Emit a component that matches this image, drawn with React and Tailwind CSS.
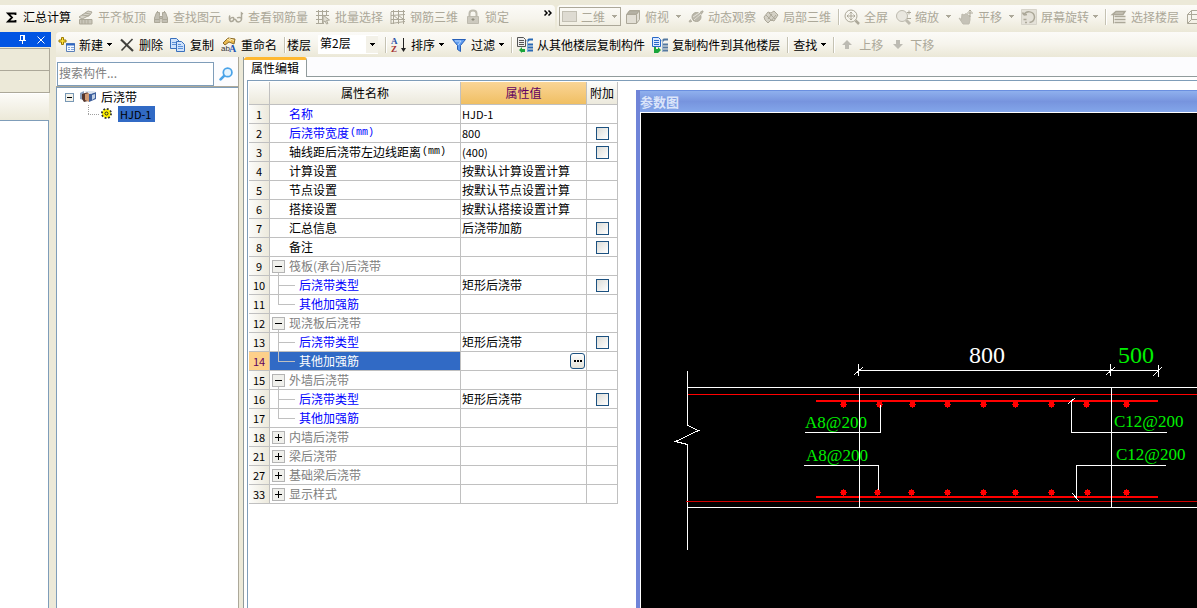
import { useState } from "react";

// ─── Icons ───────────────────────────────────────────────────────────────────

const GREY = "#aca899";

function Svg({ children, fill = "none", stroke = GREY }) {
  return (
    <svg width="16" height="16" viewBox="0 0 16 16" fill={fill} stroke={stroke} className="shrink-0 overflow-visible" aria-hidden="true">
      {children}
    </svg>
  );
}

const icons = {
  sum: (
    <Svg stroke="#000">
      <path d="M12.500 6V4.500H5L9 8.500 5 12.500h7.500V11" strokeWidth="1.800" />
    </Svg>
  ),
  slab: (
    <Svg>
      <path d="M1 8l9-6 4 1-2 3-8 4z" fill="#d6d3c8" />
      <path d="M4 6l7 1M7 4l5 1" />
      <path d="M1.500 15V10.500H14V15zM4 11v4M7 11v4M10 11v4" fill="#c9c6ba" />
    </Svg>
  ),
  binoculars: (
    <Svg fill="#c2bfb3">
      <path d="M3.500 3.500h3v3l.5 1v6H1.500V9zM12.500 3.500h-3v3l-.5 1v6h5.500V9z" />
      <path d="M6.500 7.500h3v2h-3zM2 10.500h4.500M9.500 10.500H14M4.500 2v2M11.500 2v2" />
    </Svg>
  ),
  glasses: (
    <Svg>
      <path d="M2 6.500C1 8 1 12.500 3.500 12.500S6.500 8.500 5 8.500 2 9.500 2 10.500M8 10.500c0 2 1 2.500 2.500 2.500s3-1.500 3-3-3-2-4.500-1M13.500 10.500V4l1.500 1M6.500 10.500H8" strokeWidth="1.500" />
    </Svg>
  ),
  batch: (
    <Svg>
      <path d="M1 2.500h13M1 6.500h13M1 10.500h8M1 14.500h8M3.500 1v14M7.500 1v14M11.500 1v6" />
      <path d="M8 6l6.500 5-3 .5 1.500 3-1.500.5-1.500-3-2 1.500z" fill="#dedbd0" />
    </Svg>
  ),
  rebar: (
    <Svg>
      <path d="M1 2.500h14M1 6.500l14-1M1 10.500h14M1 14.500l14-2M3.500 1v14M8.500 1v14M13.500 1v14M1 3v12M3 6l5 4M8 6l5 4" />
    </Svg>
  ),
  lock: (
    <Svg stroke="#bdbaae">
      <path d="M4.500 7V4.500Q4.500 1.500 8 1.500t3.500 3V7" strokeWidth="2" />
      <path d="M2.500 7.500h11v7h-11z" fill="#ccc9be" />
      <path d="M8 9v3M6.500 10.500h3" stroke="#8f8c7f" />
    </Svg>
  ),
  cube: (
    <Svg fill="#e2dfd5">
      <path d="M1.500 5.500l3-4h10v9l-3 4h-10zM1.500 5.500h10v9M11.500 5.500l3-4" />
      <path d="M2 5l3-3h9l-3 3z" fill="#b5b2a5" />
    </Svg>
  ),
  orbit: (
    <Svg fill="#bbb8ac">
      <circle cx="8.500" cy="8" r="4.500" />
      <path d="M4 12C1 14 .500 13 2.500 10.500M12 3.500c3-2.500 4-2 2 1L5 12" />
      <path d="M5 8l6-4M6 11l7-6" stroke="#e6e3da" />
    </Svg>
  ),
  part3d: (
    <Svg fill="#d4d1c6">
      <path d="M1 8l4-5 3 1 3-2 4 4-4 6-3-1-3 3-3-3z" />
      <path d="M3 6l6 6M6 4l6 6M5 10l4-5M8 12l5-6" />
    </Svg>
  ),
  fullscreen: (
    <Svg>
      <circle cx="7" cy="7" r="6" />
      <path d="M7 3v8M3 7h8M5.500 4.500L7 3l1.500 1.500M5.500 9.500L7 11l1.500-1.500M4.500 5.500L3 7l1.500 1.500M9.500 5.500L11 7 9.500 8.500" />
      <path d="M11.500 11.500L15 15" strokeWidth="2.500" />
    </Svg>
  ),
  zoom: (
    <Svg stroke="#bdbaae">
      <circle cx="7" cy="7" r="5.500" fill="#e9e7df" />
      <path d="M11 11l4 4" strokeWidth="3" />
      <path d="M12 3.500h4M14 1.500v4M12 9.500h4" stroke={GREY} />
    </Svg>
  ),
  hand: (
    <Svg fill="#c5c2b7" stroke="#bdbaae">
      <path d="M1 9l2.500 1.500L4 5l2 1 2-1.500L10 6l2 1v4l-1 4H5z" />
      <path d="M12 1v7M9 4h6M10.500 2.500L12 1l1.500 1.500" fill="none" stroke={GREY} />
    </Svg>
  ),
  rotate: (
    <Svg>
      <path d="M.500.500h15v15H.500z" fill="#e4e1d8" stroke="#d6d3c9" />
      <path d="M3 6c2-5 10-4 10.500 2 0 3-2 5-5 5.500M3 6L1.500 3.500M3 6l3-.5M2.500 10.500h3M4 13.500h2" strokeWidth="1.500" />
    </Svg>
  ),
  floors: (
    <Svg fill="#c8c5b9">
      <path d="M5 2.500h9l-2 3H1.500zM3.500 7.500h11M3.500 10.500h11M3.500 13.500h11" strokeWidth="1.500" />
      <path d="M2.500 5.500v9" />
    </Svg>
  ),
  box3d: (
    <Svg>
      <path d="M1.500 5.500h10v9h-10zM1.500 5.500l4-4h10v9l-4 4M11.500 5.500l4-4M5.500 1.500v9h10M1.500 14.500l4-4" />
    </Svg>
  ),
  create: (
    <Svg>
      <path d="M7.500 6.500h8v8h-8z" fill="#f2f7ff" stroke="#5a7fb8" />
      <path d="M7 7.500h9" stroke="#2f66c0" strokeWidth="2" />
      <path d="M9 10.500h2M12 10.500h3M9 12.500h2M12 12.500h3" stroke="#7ea4dd" />
      <path d="M2.500.500h2v2.500h2.500v2H4.500v2.500h-2V5H0V3h2.500z" fill="#ffe33d" stroke="#9c7a00" />
    </Svg>
  ),
  remove: (
    <Svg stroke="#40403c">
      <path d="M2 2.500L14 14" strokeWidth="2.200" />
      <path d="M13.500 2L2.500 13.500" strokeWidth="1.600" />
    </Svg>
  ),
  copy: (
    <Svg fill="#cfe2fb" stroke="#3970bd">
      <path d="M.500 1.500h6l3 3v7h-9z" />
      <path d="M6.500 4.500h5l3 3v7h-8z" />
      <path d="M2 5.500h4M2 7.500h4M8 9.500h5M8 11.500h5M8 7.500h3" stroke="#5d91d8" />
    </Svg>
  ),
  rename: (
    <Svg>
      <path d="M2 6l5-5 7 1-1 5-5-2-4 3z" fill="#e8b84e" stroke="#8a6a2a" />
      <path d="M6 2l4 2M8 1.500l5 2" stroke="#fff0b8" />
      <text x="0" y="14" fontSize="8" fontFamily="Liberation Sans" fill="#333" stroke="none">ab</text>
      <text x="8" y="15" fontSize="10" fontWeight="bold" fontFamily="Liberation Serif" fill="#1c55b8" stroke="none">A</text>
    </Svg>
  ),
  sort: (
    <Svg>
      <text x="0" y="7" fontSize="9" fontWeight="bold" fontFamily="Liberation Serif" fill="#2850a8" stroke="none">A</text>
      <text x="0" y="15" fontSize="9" fontWeight="bold" fontFamily="Liberation Serif" fill="#a33030" stroke="none">Z</text>
      <path d="M12.500 1v11" stroke="#222" />
      <path d="M10 11h5l-2.500 4z" fill="#222" stroke="none" />
    </Svg>
  ),
  filter: (
    <Svg fill="#5f9cf0" stroke="#2860b8">
      <path d="M1.500 2.500h13l-5 6v6l-3-2v-4z" />
      <path d="M4 4h6l-3 4" fill="none" stroke="#bcd9ff" />
    </Svg>
  ),
  copyFrom: (
    <Svg fill="#eee" stroke="#555">
      <path d="M.500.500h6l2 2v7h-8z" />
      <path d="M2 3.500h5M2 5.500h5M2 7.500h5" />
      <path d="M2 13l3-3v2h3v3H5v1z" fill="#19a53a" stroke="none" />
      <path d="M10 4.500l2-2h4M10 7.500h6M10 10.500h6M10 13.500h6" stroke="#2868b4" strokeWidth="2" />
      <path d="M10.500 3v12" stroke="#7aa9dd" />
    </Svg>
  ),
  copyTo: (
    <Svg fill="#dce9ff" stroke="#2868c8">
      <path d="M.500.500h6l2 2v7h-8z" />
      <path d="M2 3.500h5M2 5.500h5M2 7.500h5" />
      <path d="M2 10h2v2h2v-2l3 3-3 3H2z" fill="#19a53a" stroke="none" />
      <path d="M10 4.500l2-2h4M10 7.500h6M10 10.500h6M10 13.500h6" stroke="#5579a0" strokeWidth="2" />
      <path d="M10.500 3v12" stroke="#9bb5d0" />
    </Svg>
  ),
  up: (
    <Svg fill="#bdbbb3" stroke="none">
      <path d="M8 3l5 5h-3v4H6V8H3z" />
    </Svg>
  ),
  down: (
    <Svg fill="#bdbbb3" stroke="none">
      <path d="M8 12L3 7h3V3h4v4h3z" />
    </Svg>
  ),
};

function Caret() {
  return (
    <svg width="5" height="3" viewBox="0 0 5 3" fill="currentColor" className="shrink-0" shapeRendering="crispEdges" aria-hidden="true">
      <path d="M0 0h5v1H4v1H3v1H2V2H1V1H0z" />
    </svg>
  );
}

// ─── Toolbars ────────────────────────────────────────────────────────────────

function ToolButton({ icon, label, caret, wide, disabled }) {
  return (
    <button
      type="button"
      disabled={disabled}
      className="flex h-5 shrink-0 items-center gap-1 whitespace-nowrap text-black disabled:text-[#aca899]"
    >
      {icon && icons[icon]}
      <span>{label}</span>
      {caret && <span className={wide ? "ml-[3px]" : ""}><Caret /></span>}
    </button>
  );
}

function Separator() {
  return <span className="-mr-[3px] h-4 w-[2px] shrink-0 border-l border-r border-l-[#c5c2b3] border-r-white" />;
}

const BAR = "flex items-center gap-[7px] bg-linear-to-b from-[#fcfbf8] via-[#f6f4ec] to-[#ebe8d7]";

function MainToolbar() {
  return (
    <div className="flex h-[27px] gap-[2px]">
      <div className={`${BAR} w-[555px] shrink-0 rounded-r pb-1 pl-[3px]`}>
        <ToolButton icon="sum" label="汇总计算" />
        <ToolButton icon="slab" label="平齐板顶" disabled />
        <ToolButton icon="binoculars" label="查找图元" disabled />
        <ToolButton icon="glasses" label="查看钢筋量" disabled />
        <ToolButton icon="batch" label="批量选择" disabled />
        <ToolButton icon="rebar" label="钢筋三维" disabled />
        <ToolButton icon="lock" label="锁定" disabled />
        <button type="button" aria-label="更多" className="mr-[3px] mb-2 ml-auto">
          <svg width="8" height="6" viewBox="0 0 8 6" fill="none" stroke="#000" strokeWidth="1.500" aria-hidden="true">
            <path d="M.500.500L3 3 .500 5.500M4.500.500L7 3 4.500 5.500" />
          </svg>
        </button>
      </div>
      <div className={`${BAR} min-w-0 flex-1 overflow-hidden rounded-l pb-1 pl-[2px]`}>
        <button
          type="button"
          disabled
          className="-mr-[3px] flex h-[19px] w-[62px] shrink-0 items-center gap-1 border border-[#aca899] pl-[2px] text-[#aca899]"
        >
          <span className="h-[11px] w-[15px] border border-[#c2bfb3] bg-[#dedbd2]" />
          <span>二维</span>
          <span className="ml-[3px]"><Caret /></span>
        </button>
        <ToolButton icon="cube" label="俯视" caret wide disabled />
        <ToolButton icon="orbit" label="动态观察" disabled />
        <ToolButton icon="part3d" label="局部三维" disabled />
        <Separator />
        <ToolButton icon="fullscreen" label="全屏" disabled />
        <ToolButton icon="zoom" label="缩放" caret wide disabled />
        <ToolButton icon="hand" label="平移" caret wide disabled />
        <ToolButton icon="rotate" label="屏幕旋转" caret disabled />
        <Separator />
        <ToolButton icon="floors" label="选择楼层" disabled />
        <ToolButton icon="box3d" label="" disabled />
      </div>
    </div>
  );
}

function ComponentToolbar() {
  return (
    <div className={`${BAR} h-[25px] overflow-hidden rounded-tl pl-[3px]`}>
      <ToolButton icon="create" label="新建" caret />
      <ToolButton icon="remove" label="删除" />
      <ToolButton icon="copy" label="复制" />
      <ToolButton icon="rename" label="重命名" />
      <Separator />
      <label htmlFor="floor" className="-ml-[3px] shrink-0">楼层</label>
      <div className="flex h-[19px] w-[60px] shrink-0 items-center bg-white">
        <select id="floor" className="h-full w-[48px] appearance-none pb-1 pl-[2px] outline-none">
          <option>第2层</option>
        </select>
        <span className="flex h-[17px] w-3 items-center justify-center bg-[#f3f1e8]"><Caret /></span>
      </div>
      <Separator />
      <ToolButton icon="sort" label="排序" caret />
      <ToolButton icon="filter" label="过滤" caret />
      <Separator />
      <ToolButton icon="copyFrom" label="从其他楼层复制构件" />
      <ToolButton icon="copyTo" label="复制构件到其他楼层" />
      <Separator />
      <ToolButton label="查找" caret />
      <Separator />
      <ToolButton icon="up" label="上移" disabled />
      <ToolButton icon="down" label="下移" disabled />
    </div>
  );
}

// ─── Left dock ───────────────────────────────────────────────────────────────

function Dock() {
  return (
    <div className="flex w-[51px] shrink-0 flex-col">
      <div className="flex h-[15px] items-center justify-end gap-[11px] bg-[#0054e3] pr-[6px]">
        <button type="button" aria-label="固定">
          <svg width="7" height="9" viewBox="0 0 7 9" fill="none" stroke="#fff" shapeRendering="crispEdges" aria-hidden="true">
            <path d="M1.500 5V.500h4V5M4.500 0v5M0 5.500h7M3.500 6v3" />
          </svg>
        </button>
        <button type="button" aria-label="关闭">
          <svg width="8" height="8" viewBox="0 0 8 8" stroke="#fff" aria-hidden="true">
            <path d="M.500.500l7 7M7.500.500l-7 7" />
          </svg>
        </button>
      </div>
      <div className="mt-px mr-px h-[23px] border-t border-r border-b border-[#aca899] bg-[#ece9d8]" />
      <div className="mr-px h-[22px] border-r border-b border-[#aca899] bg-[#ece9d8]" />
      <div className="mr-[2px] h-[27px] border-t border-t-white bg-linear-to-b from-[#fcfbf8] to-[#ece9d8]" />
      <div className="mr-[2px] flex-1 border-t border-r border-[#7f9db9] bg-white" />
    </div>
  );
}

// ─── Component tree ──────────────────────────────────────────────────────────

function ComponentTree() {
  return (
    <div className="flex w-[183px] shrink-0 flex-col border-r border-[#aca899] bg-[#fcfcfe]">
      <div className="mt-[5px] flex h-[25px] items-start border-b border-[#aca899] pl-px">
        <input
          type="text"
          aria-label="搜索构件"
          placeholder="搜索构件..."
          className="h-6 min-w-0 flex-1 border border-[#7f9db9] bg-white px-px pb-1 outline-none placeholder:text-[#808080]"
        />
        <button type="button" aria-label="搜索" className="flex h-6 w-6 items-center justify-center">
          <svg width="14" height="14" viewBox="0 0 13 13" fill="#e4f4ff" stroke="#4aa3e8" aria-hidden="true">
            <path d="M4.500 8.500L1.500 11.500" strokeWidth="2.500" strokeLinecap="round" />
            <circle cx="8" cy="5" r="4" strokeWidth="1.600" />
          </svg>
        </button>
      </div>
      <ul className="flex-1 border-t border-l border-[#7f9db9] bg-white pt-px">
        <li>
          <div className="flex h-4 items-center pl-2">
            <button type="button" aria-label="折叠" className="mr-[6px]">
              <svg width="9" height="9" viewBox="0 0 9 9" fill="#f4f2ea" stroke="#7898b5" shapeRendering="crispEdges" aria-hidden="true">
                <path d="M.500.500h8v8h-8z" />
                <path d="M2 4.500h5" stroke="#000" />
              </svg>
            </button>
            <svg width="16" height="12" viewBox="0 0 16 12" className="mr-[5px]" aria-hidden="true">
              <path d="M0 2l4-2v9l-4-1z" fill="#8ba0be" />
              <path d="M2 3l6-2v9l-4 1-2-3z" fill="#54372f" />
              <path d="M5 3l4-1v9l-4-2z" fill="#d29a72" />
              <path d="M9 3l3-1 4-1v7l-7 3z" fill="#3d5f9c" />
              <path d="M4 0h9l3 1-5 2z" fill="#dbe4ef" />
              <path d="M12 4l3-1v4l-3 2z" fill="#c3d1e4" />
            </svg>
            <span>后浇带</span>
          </div>
          <ul>
            <li className="flex h-[17px] items-center pl-[31px]">
              <svg width="12" height="17" viewBox="0 0 12 17" stroke="#a0a0a0" strokeDasharray="1 1" shapeRendering="crispEdges" className="mr-px" aria-hidden="true">
                <path d="M.500 0v9M0 9.500h12" />
              </svg>
              <svg width="11" height="11" viewBox="0 0 11 11" className="mr-[6px]" aria-hidden="true">
                <circle cx="5.500" cy="5.500" r="4.500" fill="#ffff00" stroke="#333" strokeWidth="2" strokeDasharray="1.800 1.700" />
                <circle cx="5.500" cy="5.500" r="3.500" fill="#ffee00" />
                <circle cx="5.500" cy="5.500" r="1.500" fill="#ff0" stroke="#222" />
              </svg>
              <span className="flex h-4 w-[37px] items-center bg-[#316ac5] pl-[2px] text-[11px]">HJD-1</span>
            </li>
          </ul>
        </li>
      </ul>
    </div>
  );
}

// ─── Property table ──────────────────────────────────────────────────────────

const rows = [
  { no: 1, name: "名称", value: "HJD-1", blue: true },
  { no: 2, name: "后浇带宽度", unit: "(mm)", value: "800", blue: true, check: true },
  { no: 3, name: "轴线距后浇带左边线距离", unit: "(mm)", value: "(400)", check: true },
  { no: 4, name: "计算设置", value: "按默认计算设置计算" },
  { no: 5, name: "节点设置", value: "按默认节点设置计算" },
  { no: 6, name: "搭接设置", value: "按默认搭接设置计算" },
  { no: 7, name: "汇总信息", value: "后浇带加筋", check: true },
  { no: 8, name: "备注", check: true },
  { no: 9, name: "筏板(承台)后浇带", group: "open" },
  { no: 10, name: "后浇带类型", value: "矩形后浇带", child: "mid", blue: true, check: true },
  { no: 11, name: "其他加强筋", child: "last", blue: true },
  { no: 12, name: "现浇板后浇带", group: "open" },
  { no: 13, name: "后浇带类型", value: "矩形后浇带", child: "mid", blue: true, check: true },
  { no: 14, name: "其他加强筋", child: "last", blue: true },
  { no: 15, name: "外墙后浇带", group: "open" },
  { no: 16, name: "后浇带类型", value: "矩形后浇带", child: "mid", blue: true, check: true },
  { no: 17, name: "其他加强筋", child: "last", blue: true },
  { no: 18, name: "内墙后浇带", group: "closed" },
  { no: 21, name: "梁后浇带", group: "closed" },
  { no: 27, name: "基础梁后浇带", group: "closed" },
  { no: 33, name: "显示样式", group: "closed" },
];

function RowLead({ row }) {
  if (row.group) {
    const open = row.group === "open";
    return (
      <button type="button" aria-label={open ? "折叠" : "展开"} className="w-[19px] shrink-0">
        <svg width="19" height="18" viewBox="0 0 19 18" fill="none" stroke="#c0c0c0" shapeRendering="crispEdges" aria-hidden="true">
          <path d="M2.500 3.500h12v12h-12z" fill="#f0f0ec" stroke="#b4b4b4" />
          <path d="M5 9.500h7" stroke="#000" />
          {open ? <path d="M8.500 16v2" /> : <path d="M8.500 6v7" stroke="#000" />}
        </svg>
      </button>
    );
  }
  if (row.child) {
    return (
      <svg width="29" height="18" viewBox="0 0 29 18" stroke="#c0c0c0" shapeRendering="crispEdges" className="shrink-0" aria-hidden="true">
        <path d={row.child === "mid" ? "M8.500 0v18M8 9.500h17" : "M8.500 0v10M8 9.500h17"} />
      </svg>
    );
  }
  return <span className="w-[19px] shrink-0" />;
}

function nameColor(row, selected) {
  if (selected) return "bg-[#316ac5] text-white";
  if (row.group) return "text-[#808080]";
  return row.blue ? "text-[#0000ff]" : "text-black";
}

function PropertyTable() {
  const [selected, setSelected] = useState(14);

  return (
    <table className="w-[369px] table-fixed border-separate border-spacing-0">
      <thead>
        <tr className="h-[23px] [&>th]:border-r [&>th]:border-b [&>th]:border-[#c0c0c0] [&>th]:p-0 [&>th]:font-normal">
          <th className="w-[21px] bg-linear-to-b from-[#fcfcfa] to-[#ece9dc]" aria-label="序号" />
          <th className="w-[191px] bg-linear-to-b from-[#fcfcfa] to-[#ece9dc]">属性名称</th>
          <th className="w-[126px] bg-linear-to-b from-[#fad596] to-[#f0bf62] text-[#600060]">属性值</th>
          <th className="w-[31px] bg-linear-to-b from-[#fcfcfa] to-[#ece9dc]">附加</th>
        </tr>
      </thead>
      <tbody>
        {rows.map(row => {
          const active = row.no === selected;
          return (
            <tr
              key={row.no}
              onClick={() => setSelected(row.no)}
              className="h-[19px] [&>td]:border-r [&>td]:border-b [&>td]:border-[#c0c0c0] [&>td]:p-0"
            >
              <td className={`text-center text-[11px] ${active ? "bg-[#fdd08a] text-[#600060]" : "bg-linear-to-r from-[#fcfcfa] to-[#ece9dc]"}`}>
                {row.no}
              </td>
              <td className={nameColor(row, active)}>
                <div className="flex h-[18px] items-center whitespace-nowrap">
                  <RowLead row={row} />
                  <span>{row.name}</span>
                  {row.unit && <span className="pl-px font-[Liberation_Mono] text-[10px]">{row.unit}</span>}
                </div>
              </td>
              <td>
                <div className="flex h-[18px] items-center justify-between pr-px pl-px whitespace-nowrap">
                  <span className={/^[\x20-\x7e]+$/.test(row.value || "") ? "text-[11px]" : ""}>
                    {row.value}
                  </span>
                  {active && (
                    <button
                      type="button"
                      aria-label="更多"
                      className="flex h-4 w-[15px] items-center justify-center gap-px rounded-[3px] border border-[#1c5180] bg-linear-to-b from-white to-[#e4e2d8]"
                    >
                      <span className="h-[2px] w-[2px] bg-black" />
                      <span className="h-[2px] w-[2px] bg-black" />
                      <span className="h-[2px] w-[2px] bg-black" />
                    </button>
                  )}
                </div>
              </td>
              <td>
                {row.check && (
                  <input
                    type="checkbox"
                    aria-label={`${row.name} 附加`}
                    className="mx-auto block h-[13px] w-[13px] appearance-none border border-[#1c5180] bg-linear-to-br from-[#dcdcd7] to-white checked:bg-[#316ac5]"
                  />
                )}
              </td>
            </tr>
          );
        })}
      </tbody>
    </table>
  );
}

// ─── Parameter drawing ───────────────────────────────────────────────────────

const topDots = [843, 879, 912, 947, 983, 1015, 1051, 1086, 1126];
const bottomDots = [843, 877, 911, 947, 983, 1015, 1051, 1087, 1126];

function Dot({ x, y }) {
  return (
    <g fill="#f00" shapeRendering="crispEdges">
      <path d={`M${x - 2} ${y - 2}h5v5h-5zM${x - 3} ${y}h7v1h-7zM${x} ${y - 3}h1v7h-1z`} />
    </g>
  );
}

function SectionDrawing() {
  return (
    <svg width="556" height="495" viewBox="641 113 556 495" fill="none" className="shrink-0" role="img" aria-label="参数图">
      <g stroke="#fff" shapeRendering="crispEdges">
        <path d="M687.500 371V425.500L698.500 430.500 675.500 441.500 687.500 444.500V550" />
        <path d="M687 387.500H1197M687 507.500H1197" />
        <path d="M858 370.500H1158M858.500 364V376M1110.500 364V376M1158.500 365V377" />
        <path d="M854 375L863 367M1106 375L1115 367M1153 376L1162 367" />
      </g>
      <g stroke="#f00" shapeRendering="crispEdges">
        <path d="M688 394.500H1197" />
        <path d="M686 501.500H1197" stroke="#d00000" />
        <path d="M816 401H1158M816 497H1158" strokeWidth="2" />
      </g>
      {topDots.map(x => <Dot key={x} x={x} y={404} />)}
      {bottomDots.map(x => <Dot key={x} x={x} y={492} />)}
      <g fill="#00f000" fontFamily="Liberation Serif" fontSize="17">
        <text x="805" y="428">A8@200</text>
        <text x="806" y="461">A8@200</text>
        <text x="1114" y="427">C12@200</text>
        <text x="1116" y="460">C12@200</text>
      </g>
      <g fontFamily="Liberation Serif" fontSize="24">
        <text x="969" y="363" fill="#fff">800</text>
        <text x="1118" y="363" fill="#00f000">500</text>
      </g>
      <g stroke="#fff" shapeRendering="crispEdges">
        <path d="M859.500 387V507M1111.500 387V507" />
        <path d="M805 432.500H880.500V405M804 465.500H878.500V490" />
        <path d="M1071.500 401V432.500H1167M1068 404L1075 398" />
        <path d="M1076.500 497V465.500H1166M1072 493L1079 501" />
      </g>
    </svg>
  );
}

function ParameterWindow() {
  return (
    <section className="ml-[18px] flex min-w-0 flex-1 flex-col border-l-4 border-[#6f84d8]">
      <h2 className="flex h-[22px] shrink-0 items-center border-t border-[#6a8fe0] bg-linear-to-b from-[#8fb0ee] via-[#7794de] to-[#83a6ea] text-[13px] font-bold text-[#dbe5fa]">
        参数图
      </h2>
      <div className="min-h-0 flex-1 overflow-hidden border-t border-l border-white bg-black">
        <SectionDrawing />
      </div>
    </section>
  );
}

// ─── Page ────────────────────────────────────────────────────────────────────

export default function App() {
  return (
    <div className="flex h-screen flex-col overflow-hidden bg-[#ece9d8] pt-[5px] font-['Noto_Sans_CJK_SC',sans-serif] text-[12px] leading-4 text-black">
      <MainToolbar />
      <div className="flex min-h-0 flex-1">
        <Dock />
        <div className="ml-[5px] flex min-w-0 flex-1 flex-col">
          <ComponentToolbar />
          <div className="flex min-h-0 flex-1">
            <ComponentTree />
            <main className="ml-1 flex min-w-0 flex-1 flex-col border-l border-[#919b9c] bg-white">
              <div className="flex h-5 shrink-0 bg-[#fcfcfe]" role="tablist">
                <button
                  type="button"
                  role="tab"
                  aria-selected="true"
                  className="w-[63px] rounded-t-[3px] border-t-[3px] border-r border-t-[#ffb830] border-r-[#919b9c] bg-white pb-[2px]"
                >
                  属性编辑
                </button>
                <span className="flex-1 border-b border-[#919b9c]" />
              </div>
              <div className="mt-[3px] ml-[3px] flex min-h-0 flex-1 border-t border-l border-[#7f9db9] pt-px">
                <div className="pl-px">
                  <PropertyTable />
                </div>
                <div className="flex min-w-0 flex-1 pt-2">
                  <ParameterWindow />
                </div>
              </div>
            </main>
          </div>
        </div>
      </div>
    </div>
  );
}
